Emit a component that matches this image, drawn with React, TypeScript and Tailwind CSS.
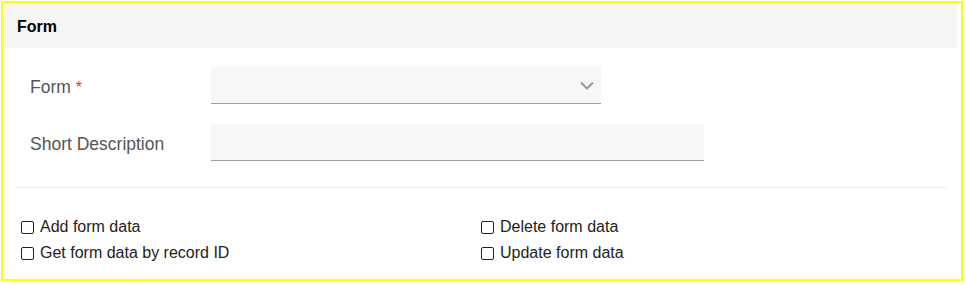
import React from "react";

function Check({ label }: { label: string }) {
  return (
    <div className="flex items-center h-[26px]">
      <span className="w-[13px] h-[13px] border-[1.5px] border-[#222] rounded-[2px] bg-white shrink-0" />
      <span className="ml-[6px] text-[16px] text-[#222]">{label}</span>
    </div>
  );
}

export default function App() {
  return (
    <div className="w-[965px] h-[285px] bg-white font-['Liberation_Sans',Arial,sans-serif] pt-px pl-px">
      <div className="w-[962px] h-[280px] border-2 border-[#ffff00] pl-px pr-[4px]">
        <div className="h-[45px] bg-[#f5f5f5] pl-[13px] pt-[2px] flex items-center">
          <span className="font-bold text-[16px] text-black">Form</span>
        </div>
        <div className="ml-[12px] mr-[10px]">
          <div className="pt-[19px] pl-[14px] flex flex-col gap-[20px]">
            <div className="flex items-center">
              <div className="w-[181px] mt-[4px] text-[17.5px] text-[#555]">
                Form<span className="text-[#e53935] text-[16px] ml-[5px]">*</span>
              </div>
              <div className="w-[390px] h-[37px] bg-[#f7f7f7] border-b border-[#9e9e9e] flex items-center justify-end pr-[7px]">
                <svg width="14" height="9" viewBox="0 0 14 9" fill="none">
                  <path d="M1 1.5L7 7.5L13 1.5" stroke="#9a9a9a" strokeWidth="2" />
                </svg>
              </div>
            </div>
            <div className="flex items-center">
              <div className="w-[181px] mt-[4px] text-[17.5px] text-[#555]">Short Description</div>
              <div className="w-[493px] h-[37px] bg-[#f7f7f7] border-b border-[#9e9e9e]" />
            </div>
          </div>
          <div className="mt-[26px] border-t border-[#eeeeee]" />
          <div className="pt-[26px] pl-[5px] grid grid-cols-[460px_460px]">
            <div>
              <Check label="Add form data" />
              <Check label="Get form data by record ID" />
            </div>
            <div>
              <Check label="Delete form data" />
              <Check label="Update form data" />
            </div>
          </div>
        </div>
      </div>
    </div>
  );
}
